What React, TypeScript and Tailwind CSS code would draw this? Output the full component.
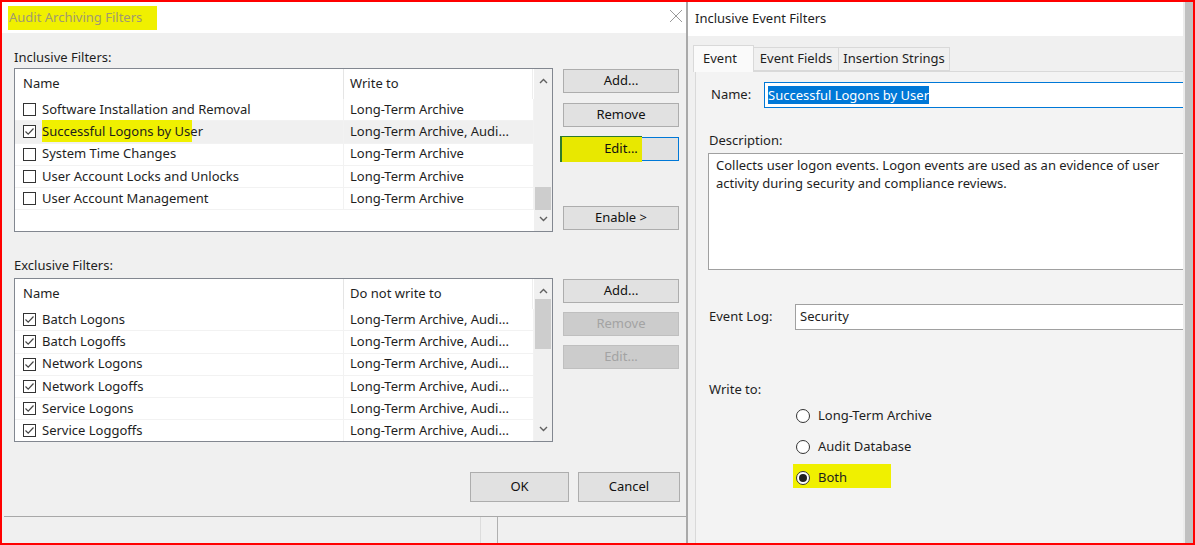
import React from 'react'

const font = { fontFamily: '"Noto Sans", "Open Sans", sans-serif' }

function CheckBox({ checked }: { checked: boolean }) {
  return (
    <span className="w-[13px] h-[13px] border border-[#333] bg-white flex items-center justify-center shrink-0">
      {checked && (
        <svg width="11" height="11" viewBox="0 0 11 11">
          <polyline points="1.5,5.5 4.2,8.2 9.5,2.5" fill="none" stroke="#444" strokeWidth="1.2" />
        </svg>
      )}
    </span>
  )
}

function Btn({ label, disabled, focused, mark }: { label: string; disabled?: boolean; focused?: boolean; mark?: boolean }) {
  return (
    <div
      className={`relative h-[24px] w-[116px] flex items-center justify-center text-[13px] border ${
        disabled
          ? 'bg-[#cccccc] border-[#bfbfbf] text-[#a3a3a3]'
          : focused
          ? 'bg-[#e1e1e1] border-[#0078d7] text-[#111]'
          : 'bg-[#e1e1e1] border-[#adadad] text-[#111]'
      }`}
    >
      {mark && <span className="absolute left-[-4px] top-[-2px] h-[26px] w-[82px] bg-[#e8e800] border-l-2 border-t border-[#2d7a2d]" />}
      <span className="relative">{label}</span>
    </div>
  )
}

function Chevron({ up }: { up?: boolean }) {
  return (
    <svg width="9" height="6" viewBox="0 0 9 6">
      <polyline points={up ? '1,5 4.5,1.5 8,5' : '1,1 4.5,4.5 8,1'} fill="none" stroke="#606060" strokeWidth="1.4" />
    </svg>
  )
}

type Row = { name: string; to: string; checked: boolean; selected?: boolean }

function FilterList({ col2, rows, thumbTop, thumbH }: { col2: string; rows: Row[]; thumbTop: number; thumbH: number }) {
  return (
    <div className="w-[539px] h-[164px] border border-[#828790] bg-white flex overflow-hidden">
      <div className="flex-1 flex flex-col">
        <div className="h-[30px] flex items-center shrink-0 text-[13px] text-[#1e1e1e]">
          <div className="w-[329px] pl-[8px] h-full flex items-center border-r border-[#e5e5e5]">Name</div>
          <div className="flex-1 pl-[6px] h-full flex items-center border-r border-[#eeeeee] mr-[1px]">{col2}</div>
        </div>
        {rows.map((r) => (
          <div
            key={r.name}
            className={`h-[22.25px] flex items-center shrink-0 text-[13px] text-[#1e1e1e] border-b border-[#f2f2f2] ${r.selected ? 'bg-[#f0f0f0]' : ''}`}
          >
            <div className="w-[329px] pl-[8px] flex items-center gap-[6px] h-full border-r border-[#f2f2f2]">
              <CheckBox checked={r.checked} />
              {r.selected ? (
                <span className="relative">
                  <span className="absolute left-0 top-[-2px] h-[22px] w-[150px] bg-[#f0f000]" />
                  <span className="relative">{r.name}</span>
                </span>
              ) : (
                <span>{r.name}</span>
              )}
            </div>
            <div className="flex-1 pl-[6px] h-full flex items-center border-r border-[#f2f2f2] whitespace-nowrap overflow-hidden">{r.to}</div>
          </div>
        ))}
      </div>
      <div className="w-[18px] bg-[#f0f0f0] flex flex-col items-center justify-between py-[9px] relative">
        <Chevron up />
        <span className="absolute left-[1px] right-[1px] bg-[#cdcdcd]" style={{ top: thumbTop, height: thumbH }} />
        <Chevron />
      </div>
    </div>
  )
}

function Radio({ label, on, mark }: { label: string; on?: boolean; mark?: boolean }) {
  return (
    <div className="relative flex items-center gap-[8px] h-[23px] text-[13px] text-[#1e1e1e]">
      {mark && <span className="absolute left-[-3px] top-[-2px] h-[24px] w-[98px] bg-[#f0f000]" />}
      <span className="relative w-[14px] h-[14px] rounded-full border border-[#333] bg-white flex items-center justify-center">
        {on && <span className="w-[8px] h-[8px] rounded-full bg-[#222]" />}
      </span>
      <span className="relative">{label}</span>
    </div>
  )
}

export default function App() {
  const inclusive: Row[] = [
    { name: 'Software Installation and Removal', to: 'Long-Term Archive', checked: false },
    { name: 'Successful Logons by User', to: 'Long-Term Archive, Audi...', checked: true, selected: true },
    { name: 'System Time Changes', to: 'Long-Term Archive', checked: false },
    { name: 'User Account Locks and Unlocks', to: 'Long-Term Archive', checked: false },
    { name: 'User Account Management', to: 'Long-Term Archive', checked: false },
  ]
  const exclusive: Row[] = ['Batch Logons', 'Batch Logoffs', 'Network Logons', 'Network Logoffs', 'Service Logons', 'Service Loggoffs'].map(
    (n) => ({ name: n, to: 'Long-Term Archive, Audi...', checked: true })
  )

  return (
    <div className="w-[1195px] h-[545px] border-2 border-[#ff0000] flex overflow-hidden bg-[#f0f0f0]" style={font}>
      {/* left dialog */}
      <div className="w-[684px] h-full flex flex-col shrink-0">
        <div className="h-[31px] bg-white flex items-center justify-between pl-[6px] pr-[3px] shrink-0">
          <span className="bg-[#f0f000] text-[13px] text-[#a09a70] px-[1px] h-[24px] flex items-center w-[149px]">Audit Archiving Filters</span>
          <svg width="14" height="14" viewBox="0 0 14 14" className="mt-[-4px]">
            <path d="M1 1 L13 13 M13 1 L1 13" stroke="#9a9a9a" strokeWidth="1" />
          </svg>
        </div>
        <div className="flex-1 flex flex-col pl-[12px] pr-[5px]">
          <div className="h-[35px] flex items-end pb-[1px] text-[13px] text-[#1e1e1e]">Inclusive Filters:</div>
          <div className="flex gap-[10px]">
            <FilterList col2="Write to" rows={inclusive} thumbTop={118} thumbH={23} />
            <div className="flex flex-col gap-[10px] pt-[1px]">
              <Btn label="Add..." />
              <Btn label="Remove" />
              <Btn label="Edit..." focused mark />
              <div className="h-[25px]" />
              <Btn label="Enable >" />
            </div>
          </div>
          <div className="h-[46px] flex items-end pb-[3px] text-[13px] text-[#1e1e1e]">Exclusive Filters:</div>
          <div className="flex gap-[10px]">
            <FilterList col2="Do not write to" rows={exclusive} thumbTop={20} thumbH={50} />
            <div className="flex flex-col gap-[9px] pt-[1px]">
              <Btn label="Add..." />
              <Btn label="Remove" disabled />
              <Btn label="Edit..." disabled />
            </div>
          </div>
          <div className="flex justify-end gap-[9px] mt-[30px] pr-[1px]">
            <div className="w-[99px] h-[30px] bg-[#e1e1e1] border border-[#adadad] flex items-center justify-center text-[13px] text-[#111]">OK</div>
            <div className="w-[102px] h-[30px] bg-[#e1e1e1] border border-[#adadad] flex items-center justify-center text-[13px] text-[#111]">Cancel</div>
          </div>
        </div>
        <div className="h-[27px] border-t border-[#a8a8a8] flex shrink-0 ml-[2px]">
          <div className="w-[477px] border-r border-[#dcdcdc]" />
          <div className="w-[17px] border-r border-[#b0b0b0]" />
        </div>
      </div>
      <div className="w-[2px] bg-[#a9a9a9] shrink-0" />
      {/* right dialog */}
      <div className="flex-1 flex flex-col overflow-hidden">
        <div className="h-[34px] bg-white flex items-center pl-[7px] text-[13px] text-[#1e1e1e] shrink-0">Inclusive Event Filters</div>
        <div className="flex-1 flex flex-col pl-[5px] pt-[8px]">
          <div className="flex items-end h-[27px] text-[13px] text-[#1e1e1e] shrink-0">
            <div className="h-[27px] w-[61px] bg-[#fafafa] border border-b-0 border-[#d9d9d9] flex items-center pl-[9px] relative z-10 mb-[-1px]">Event</div>
            <div className="h-[24px] w-[85px] bg-[#f0f0f0] border border-l-0 border-[#d9d9d9] flex items-center justify-center">Event Fields</div>
            <div className="h-[24px] w-[111px] bg-[#f0f0f0] border border-l-0 border-[#d9d9d9] flex items-center justify-center">Insertion Strings</div>
          </div>
          <div className="flex-1 ml-[2px] mr-[-3px] border-l border-t border-[#d9d9d9] bg-[#f3f3f3] pl-[12px] flex flex-col text-[13px] text-[#1e1e1e]">
            <div className="flex items-center mt-[10px] h-[26px]">
              <span className="w-[56px] pl-[3px]">Name:</span>
              <div className="flex-1 h-[26px] border border-[#0078d7] bg-white flex items-center pl-[3px]">
                <span className="bg-[#0078d7] text-white leading-[18px]">Successful Logons by User</span>
              </div>
            </div>
            <div className="mt-[23px] pl-[1px]">Description:</div>
            <div className="mt-[2px] h-[117px] border border-[#a0a0a0] bg-white px-[7px] pt-[2px] leading-[18px]">
              Collects user logon events. Logon events are used as an evidence of user activity during security and compliance reviews.
            </div>
            <div className="flex items-center mt-[34px] h-[26px]">
              <span className="w-[87px] pl-[1px]">Event Log:</span>
              <div className="flex-1 h-[26px] border border-[#a0a0a0] bg-white flex items-center pl-[4px]">Security</div>
            </div>
            <div className="mt-[50px] pl-[1px]">Write to:</div>
            <div className="flex flex-col gap-[8px] pl-[88px] mt-[5px]">
              <Radio label="Long-Term Archive" />
              <Radio label="Audit Database" />
              <Radio label="Both" on mark />
            </div>
          </div>
        </div>
      </div>
      <div className="w-[10px] bg-[#c0c0c0] shrink-0 border-l-2 border-[#ececec] relative z-10" />
    </div>
  )
}
